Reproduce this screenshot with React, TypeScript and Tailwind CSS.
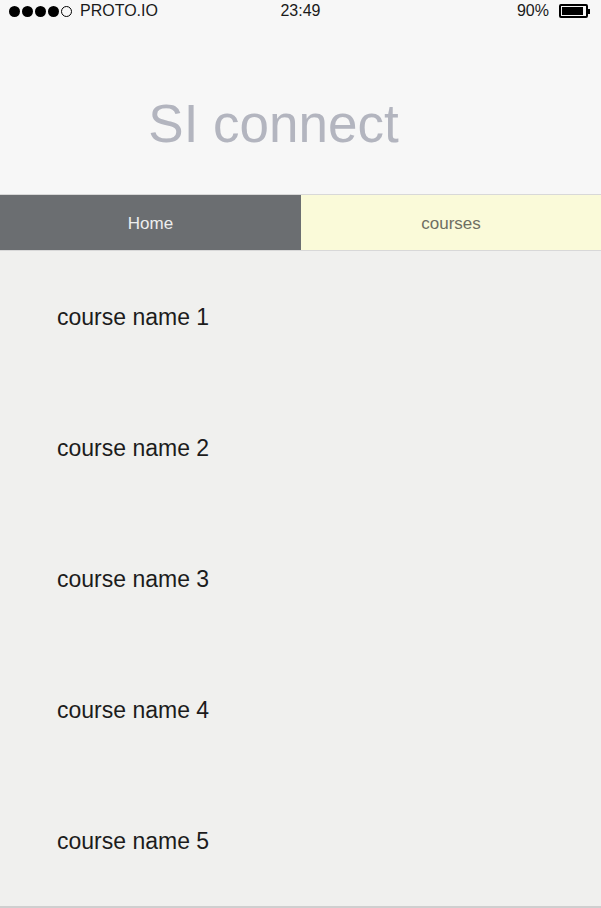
import React from "react";

export default function App() {
  const courses = ["course name 1", "course name 2", "course name 3", "course name 4", "course name 5"];
  return (
    <div className="w-[601px] h-[908px] flex flex-col bg-[#f0f0ee] overflow-hidden" style={{ fontFamily: '"Liberation Sans", Arial, sans-serif' }}>
      <div className="bg-[#f7f7f7] h-[194px] shrink-0 flex flex-col">
        <div className="h-[22px] flex items-center px-[9px] text-[16px] text-[#1a1a1a] relative">
          <div className="flex items-center gap-[2px]">
            {[0, 1, 2, 3].map((i) => (
              <span key={i} className="w-[11px] h-[11px] rounded-full bg-black inline-block" />
            ))}
            <span className="w-[11px] h-[11px] rounded-full border border-black inline-block" />
            <span className="ml-[6px]">PROTO.IO</span>
          </div>
          <div className="absolute left-0 right-0 text-center pointer-events-none">23:49</div>
          <div className="ml-auto flex items-center gap-[10px] mr-[2px]">
            <span>90%</span>
            <div className="flex items-center">
              <div className="w-[29px] h-[14px] border-[2px] border-black rounded-[2px] p-[1px]">
                <div className="h-full w-[92%] bg-black" />
              </div>
              <div className="w-[2px] h-[5px] bg-black" />
            </div>
          </div>
        </div>
        <div className="flex-1 flex items-center justify-center pt-[30px]">
          <span className="text-[53px] text-[#b3b5bf] leading-none mr-[54px]">SI connect</span>
        </div>
      </div>
      <div className="h-[57px] shrink-0 flex border-t border-b border-[#d8d8d8]">
        <div className="w-[301px] bg-[#6b6e71] flex items-center justify-center pt-[2px] text-[17px] text-[#eeeeee]">Home</div>
        <div className="flex-1 bg-[#fafad9] flex items-center justify-center pt-[2px] text-[17px] text-[#6e6e62]">courses</div>
      </div>
      <div className="flex flex-col">
        {courses.map((c) => (
          <div key={c} className="h-[131px] flex items-center pl-[57px] pt-[2px] text-[23px] text-[#1c1c1c]">
            {c}
          </div>
        ))}
      </div>
      <div className="mt-auto h-[2px] shrink-0 bg-[#cfcfcf]" />
    </div>
  );
}
